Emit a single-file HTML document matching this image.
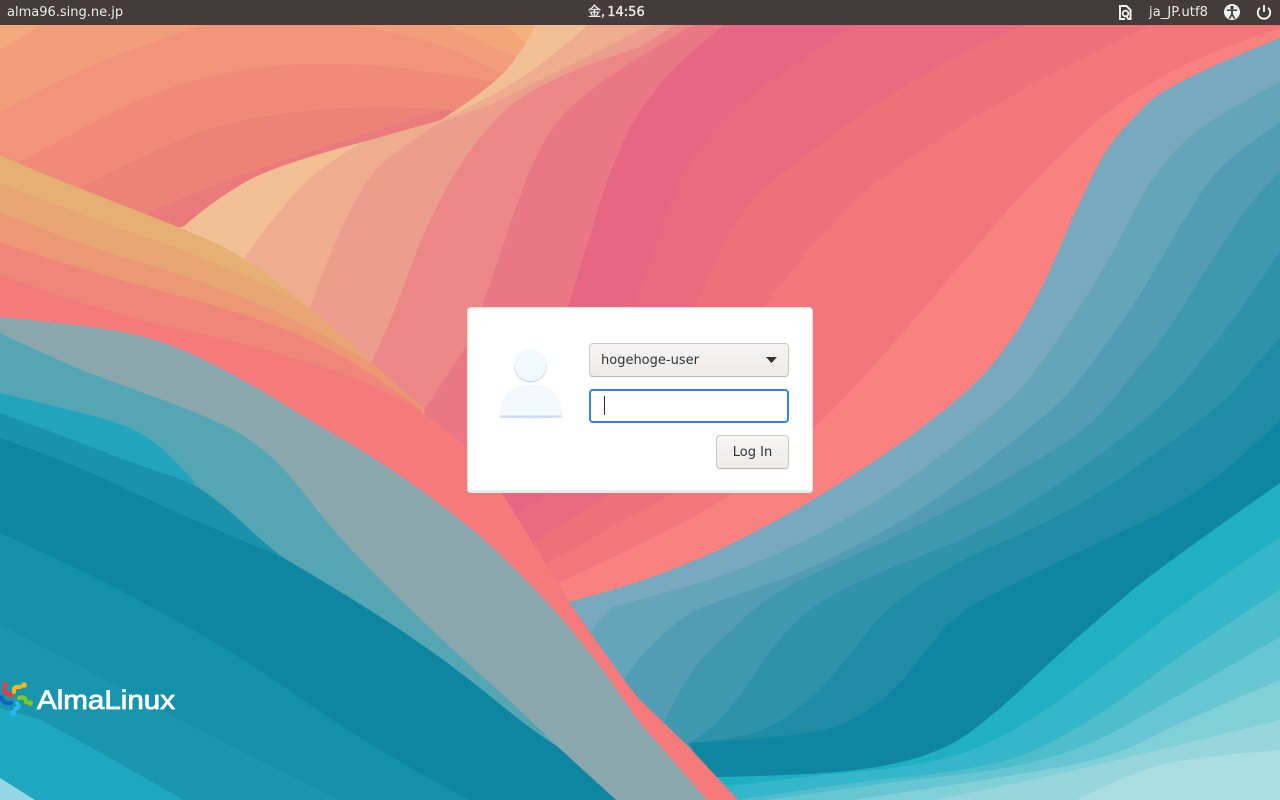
<!DOCTYPE html>
<html lang="ja">
<head>
<meta charset="utf-8">
<title>Login</title>
<style>
html,body{margin:0;padding:0;width:1280px;height:800px;overflow:hidden;background:#f98180}
body{position:relative;font-family:"DejaVu Sans","Noto Sans CJK JP",sans-serif}
svg.bg{position:absolute;left:0;top:0}
.bar{position:absolute;left:0;top:0;width:1280px;height:25px;background:#443b3b;color:#ececec;font-size:13px;line-height:25px}
.bar span{position:absolute;top:0;white-space:nowrap}
.dlg{position:absolute;left:467px;top:307px;width:344px;height:182px;background:#fff;border:1px solid #e2dfdc;border-bottom:3px solid #ecebe9;border-radius:4px}
.btn{position:absolute;box-sizing:border-box;background:linear-gradient(#f6f5f4,#edebe9);border:1px solid #cdc7c2;border-bottom-color:#bfb8b1;border-radius:4px;color:#2e3436;font-size:13px;line-height:33px;box-shadow:0 1px 1px rgba(0,0,0,.05)}
.entry{position:absolute;box-sizing:border-box;top:81px;width:200px;height:34px;background:#fff;border:2px solid #3584e4;border-radius:4px}
.caret{position:absolute;left:13px;top:5px;width:1px;height:19px;background:#2e3436}
</style>
</head>
<body>
<svg class="bg" width="1280" height="800" viewBox="0 0 1280 800" xmlns="http://www.w3.org/2000/svg">
<defs>
<clipPath id="warm"><path d="M535 25Q522 52 506 70Q490 88 441 120L363 142Q286 162 253 178Q220 195 184 226L0 300L0 0L535 0Z"/></clipPath>
</defs>
<rect width="1280" height="800" fill="#f98180"/>
<path fill="#f3767c" d="M1300 22Q1232 42 1181 67Q1130 92 1089 128Q1048 165 1007 211Q966 258 930 301Q893 345 856 385Q820 425 779 459Q738 493 689 519Q640 545 558 583L0 800L0 0L1300 0Z"/>
<path fill="#ee7079" d="M1150 25Q1109 45 1054 73Q999 102 946 135Q893 168 860 195Q803 252 766 305Q720 400 673 493L547 563L0 800L0 0L1150 0Z"/>
<path fill="#ea6a80" d="M1024 25Q926 68 860 115Q795 162 766 187Q738 212 717 258Q697 305 650 400L612 493L533 543L0 800L0 0L1024 0Z"/>
<path fill="#e56783" d="M856 25Q771 78 742 103Q713 128 697 151Q681 175 666 216Q652 258 640 288L620 330L547 493L510 520L0 800L0 0L856 0Z"/>
<path fill="#e97784" d="M724 25Q680 60 660 84Q640 108 626 136Q612 165 600 203Q588 242 578 274Q568 307 540 400L502 493L0 800L0 0L724 0Z"/>
<path fill="#ec8888" d="M693 25L640 57Q584 92 563 115Q543 138 528 175Q514 212 504 242Q494 272 482 307L467 345L424 410L0 800L0 0L693 0Z"/>
<path fill="#ec9d8c" d="M675 25L640 47Q531 82 500 115Q469 148 451 180Q433 212 420 243Q408 275 398 301Q388 328 371 363L0 800L0 0L675 0Z"/>
<path fill="#efad90" d="M655 25L640 30L571 65L490 105L441 122Q388 155 373 173Q359 192 347 217Q335 242 322 275L310 308L0 800L0 0L655 0Z"/>
<path fill="#f3bf94" d="M588 25Q543 65 516 81Q490 98 441 120L363 142Q318 168 298 190Q278 212 261 235L245 257L0 800L0 0L588 0Z"/>
<!-- warm top-left -->
<path fill="#ea7a7c" d="M535 25Q522 52 506 70Q490 88 441 120L363 142Q286 162 253 178Q220 195 184 226L0 300L0 0L535 0Z"/>
<g clip-path="url(#warm)">
<path fill="#ed8277" d="M0 300L151 212Q210 185 300 155L535 80L535 0L0 0Z"/>
<path fill="#f08b79" d="M0 210L86 185Q163 145 204 131Q245 118 296 112Q347 107 378 107Q408 107 449 110L600 130L600 0L0 0Z"/>
<path fill="#f19479" d="M0 175L20 162Q82 128 122 108Q163 88 204 78Q245 68 286 65Q327 63 367 65Q408 67 494 82L600 110L600 0L0 0Z"/>
<path fill="#f39e7b" d="M0 112Q82 68 122 53Q163 38 204 25L355 25Q429 38 467 56L506 75L600 110L600 0L0 0Z"/>
<path fill="#f4a97c" d="M0 50L41 25L41 0L0 0Z"/>
<path fill="#f4a67a" d="M445 25L518 58L560 80L560 0L445 0Z"/>
<path fill="#f5b278" d="M506 25L527 45L560 60L560 0L506 0Z"/>
</g>
<!-- right teal bands -->
<path fill="#78a9be" d="M1280 38Q1170 82 1148 103Q1126 125 1113 141Q1101 158 1093 175Q1085 192 1074 215Q1064 238 1054 261Q1044 285 1032 306Q1020 328 1005 348Q991 368 974 384Q958 400 925 425Q893 450 848 478Q803 507 762 528Q722 550 681 566Q640 583 569 602L600 800L1280 800Z"/>
<path fill="#65a5b9" d="M1280 82Q1211 118 1188 138Q1166 158 1152 180Q1138 202 1120 238Q1101 275 1084 300Q1068 325 1050 350Q1032 375 1022 387Q1011 400 988 418Q966 437 925 467Q885 497 844 520Q803 543 762 560Q722 577 681 588Q640 600 612 607L590 632L600 800L1280 800Z"/>
<path fill="#529cb5" d="M1280 122Q1228 158 1213 176Q1199 195 1180 226Q1162 258 1144 288Q1126 318 1103 348Q1081 378 1072 389Q1064 400 1026 431Q987 463 944 493Q901 523 852 548Q803 573 762 586Q722 600 700 608Q681 617 660 637L640 657L624 680L640 800L1280 800Z"/>
<path fill="#3f97b0" d="M1280 172Q1252 198 1232 230Q1211 262 1188 298Q1166 335 1148 356Q1130 378 1112 401Q1093 425 1060 446Q1028 467 977 495Q926 523 881 543Q836 563 799 581Q762 600 742 620Q722 640 707 653Q693 667 678 695L664 722L700 800L1280 800Z"/>
<path fill="#2f92ab" d="M1280 252Q1244 305 1224 331Q1203 358 1186 379Q1170 400 1126 435Q1081 470 1034 500Q987 530 936 550Q885 570 850 586Q815 603 795 623Q775 643 762 663Q750 683 730 708Q709 733 689 743L720 800L1280 800Z"/>
<path fill="#1f8ba5" d="M1280 338Q1250 370 1239 385Q1228 400 1179 436Q1130 473 1089 498Q1048 523 1007 540Q966 557 925 582Q885 607 865 635Q844 663 824 685Q803 707 778 722Q754 738 689 743L720 800L1280 800Z"/>
<path fill="#0e85a1" d="M1280 420Q1232 467 1201 488Q1170 510 1130 528Q1089 547 1048 567Q1007 587 982 600Q958 613 942 631Q926 650 910 671Q893 693 868 710Q844 727 813 732Q783 738 689 743L720 800L1280 800Z"/>
<path fill="#20b0c4" d="M1280 483Q1170 560 1135 588Q1101 617 1078 637Q1056 657 1031 680Q1007 703 982 723Q958 743 931 753Q905 763 864 769Q824 775 717 777L730 800L1280 800Z"/>
<path fill="#35b7c9" d="M1280 537Q1191 597 1150 630Q1109 663 1078 686Q1048 710 1013 730Q979 750 942 759Q905 768 854 772Q803 777 722 787L730 800L1280 800Z"/>
<path fill="#4fbecc" d="M1280 590Q1191 647 1150 678Q1109 710 1068 733Q1028 757 987 765Q946 773 895 778Q844 783 738 800L1280 800Z"/>
<path fill="#68c6d3" d="M1280 637Q1171 700 1130 723Q1089 747 1048 758Q1007 770 946 776Q885 783 766 800L1280 800Z"/>
<path fill="#80d0d8" d="M1280 680Q1191 717 1150 738Q1109 760 1038 771Q967 783 852 800L1280 800Z"/>
<path fill="#97d6dd" d="M1280 720Q1170 747 1109 762Q1048 777 934 800L1280 800Z"/>
<path fill="#abdee2" d="M1280 750Q1191 757 1160 765Q1130 773 1077 800L1280 800Z"/>
<!-- yellow ribbons -->
<path fill="#e5b071" d="M0 155L41 173Q122 205 153 217Q184 229 215 243Q245 257 278 283Q310 308 340 335Q371 363 424 410L428 430L0 800Z"/>
<path fill="#e8a675" d="M0 183Q82 215 122 229Q163 242 204 259Q245 275 278 291L310 308L424 410L0 800Z"/>
<path fill="#ec9875" d="M0 212Q82 245 122 257Q163 268 204 283Q245 298 275 311Q306 325 340 345L371 363L424 410L0 800Z"/>
<path fill="#ef8679" d="M0 242Q82 270 143 286Q204 302 245 315Q286 328 326 348Q367 368 424 412L0 800Z"/>
<!-- coral stripe -->
<path fill="#f47a7c" d="M0 275Q82 305 143 320Q204 335 245 345Q286 355 326 368Q367 382 395 397Q424 412 449 432L470 450L502 493L531 540L558 583L569 602L590 632L624 680L640 700L689 747L738 800L0 800Z"/>
<!-- grey band -->
<path fill="#8aa7ae" d="M0 317Q82 325 112 330Q143 335 170 345Q196 355 224 370Q253 385 285 405Q318 425 342 439Q367 453 408 481Q449 510 480 536Q510 563 540 595Q571 627 605 673L640 723L707 800L0 800Z"/>
<path fill="#55a6b3" d="M0 333Q61 362 92 374Q122 385 163 400Q224 423 242 435Q261 447 278 463Q294 480 310 501Q327 523 347 545Q367 567 408 607Q449 647 490 683Q531 720 558 747L616 800L0 800Z"/>
<path fill="#20a5bd" d="M0 393L29 400Q102 417 122 425Q143 433 159 446Q175 460 195 483L0 600Z"/>
<path fill="#1a92ab" d="M0 413Q82 443 112 455Q143 467 169 475Q195 483 212 497Q229 510 245 525Q261 540 282 557L0 800Z"/>
<path fill="#0e85a1" d="M0 438Q82 467 122 487Q163 507 222 532L282 557Q367 607 408 635Q449 663 490 696Q531 730 558 747L616 800L0 800Z"/>
<path fill="#1490a9" d="M0 533Q82 570 122 591Q163 613 204 636Q245 660 286 688Q327 717 367 742Q408 767 469 800L0 800Z"/>
<path fill="#1a95ae" d="M0 625Q82 667 143 700Q204 733 271 766L339 800L0 800Z"/>
<path fill="#1ea7c0" d="M0 708L41 720Q102 753 184 800L0 800Z"/>
<path fill="#96d8e2" d="M0 778L35 800L0 800Z"/>
<!-- AlmaLinux logo -->
<g fill="none" stroke-width="4.200" stroke-linecap="round">
<path stroke="#ec3b41" d="M4 690Q6 695 12 695"/>
<circle cx="5" cy="685" r="2.800" fill="#ec3b41" stroke="none"/>
<path stroke="#f5b90f" d="M14 692Q13 686 20 687"/>
<circle cx="24" cy="685" r="2.800" fill="#f5b90f" stroke="none"/>
<path stroke="#82c91e" d="M19 698Q26 696 26 702"/>
<circle cx="30" cy="703" r="2.800" fill="#82c91e" stroke="none"/>
<path stroke="#2ab7ef" d="M17 703Q21 708 15 709"/>
<circle cx="13" cy="713" r="3" fill="#2ab7ef" stroke="none"/>
<path stroke="#0a66c2" d="M2 699Q4 704 11 703"/>
<circle cx="1" cy="698" r="2.800" fill="#0a66c2" stroke="none"/>
</g>
<text x="37" y="709" font-family="'Liberation Sans',sans-serif" font-weight="400" font-size="27" fill="#fff" stroke="#fff" stroke-width=".8" textLength="138" lengthAdjust="spacingAndGlyphs">AlmaLinux</text>
</svg>

<div class="bar">
<span style="left:7px">alma96.sing.ne.jp</span>
<span style="left:588px;-webkit-text-stroke:.35px #ececec;word-spacing:-2px">金, 14:56</span>
<span style="left:1149px;letter-spacing:.1px">ja_JP.utf8</span>
<svg style="position:absolute;left:0;top:0" width="1280" height="25" viewBox="0 0 1280 25" xmlns="http://www.w3.org/2000/svg">
<path d="M1128 19H1130.500V10L1126.500 6H1120V19H1125" fill="none" stroke="#f4f4f4" stroke-width="2"/>
<circle cx="1125.500" cy="13.500" r="2.800" fill="none" stroke="#f4f4f4" stroke-width="1.800"/>
<path d="M1126.500 16L1128.500 19.500" stroke="#f4f4f4" stroke-width="1.800"/>
<circle cx="1232" cy="12" r="8" fill="#f4f4f4"/>
<circle cx="1232" cy="7.500" r="1.700" fill="#443b3b"/>
<path d="M1227.500 10.200H1236.500M1232 10V14M1232 14L1229.800 18M1232 14L1234.200 18" stroke="#443b3b" stroke-width="1.700" fill="none" stroke-linecap="round"/>
<path d="M1260 7.800A6.200 6.200 0 1 0 1268 7.800" fill="none" stroke="#f4f4f4" stroke-width="1.900"/>
<path d="M1264 5V12" stroke="#f4f4f4" stroke-width="1.900"/>
</svg>
</div>

<div class="dlg">
<svg style="position:absolute;left:-1px;top:-1px" width="346" height="186" viewBox="467 307 346 186" xmlns="http://www.w3.org/2000/svg">
<circle cx="530.500" cy="366" r="16.500" fill="#c9dcf8"/>
<circle cx="530.500" cy="365" r="16" fill="#f4f8ff"/>
<path d="M500 417.500Q500 385 531 385Q562 385 562 417.500Q531 419 500 417.500Z" fill="#c9dcf8"/>
<path d="M500 415.500Q500 385 531 385Q562 385 562 415.500Z" fill="#f4f8ff"/>
</svg>
<div class="btn" style="left:121px;top:35px;width:200px;height:34px;padding-left:11px">hogehoge-user
<svg style="position:absolute;right:10px;top:12px" width="13" height="8" viewBox="0 0 13 8" xmlns="http://www.w3.org/2000/svg"><path d="M1 1H12L6.500 7Z" fill="#2e3436"/></svg>
</div>
<div class="entry" style="left:121px"><div class="caret"></div></div>
<div class="btn" style="left:248px;top:127px;width:73px;height:34px;text-align:center">Log In</div>
</div>
</body>
</html>
